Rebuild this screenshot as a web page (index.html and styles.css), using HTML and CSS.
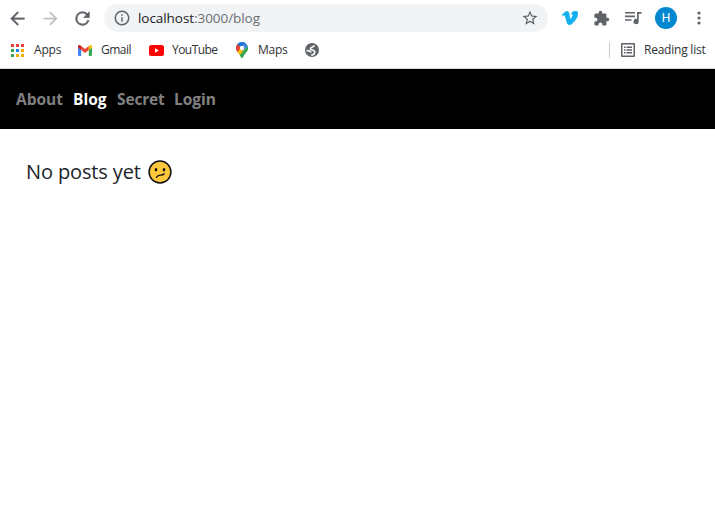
FILE: index.html
```
<!DOCTYPE html>
<html lang="en">
<head>
<meta charset="utf-8">
<title>Blog</title>
<link rel="stylesheet" href="styles.css">
</head>
<body>
<header class="browser">
  <div class="toolbar">
    <svg class="back" width="21" height="21" viewBox="0 0 24 24" fill="#5f6368" stroke="#5f6368" stroke-width=".3"><path d="M20 11H7.83l5.59-5.59L12 4l-8 8 8 8 1.41-1.41L7.83 13H20z"/></svg>
    <svg class="forward" width="21" height="21" viewBox="0 0 24 24" fill="#bdbfc1"><path d="M12 4l-1.41 1.41L16.17 11H4v2h12.17l-5.58 5.59L12 20l8-8z"/></svg>
    <svg class="reload" width="21" height="21" viewBox="0 0 24 24" fill="#5f6368" stroke="#5f6368" stroke-width=".4"><path d="M17.65 6.35A7.96 7.96 0 0 0 12 4a8 8 0 1 0 7.73 10h-2.08A6 6 0 1 1 12 6c1.66 0 3.14.69 4.22 1.78L13 11h7V4z"/></svg>
    <div class="address">
      <svg class="info" width="18" height="18" viewBox="0 0 24 24" fill="#5f6368"><path d="M11 7h2v2h-2zm0 4h2v6h-2zm1-9a10 10 0 1 0 0 20 10 10 0 0 0 0-20zm0 18a8 8 0 1 1 0-16 8 8 0 0 1 0 16z"/></svg>
      <span class="url"><span class="host">localhost</span>:3000/blog</span>
      <svg class="star" width="18" height="18" viewBox="0 0 24 24" fill="#5f6368"><path d="M22 9.24l-7.19-.62L12 2 9.19 8.63 2 9.24l5.46 4.73L5.82 21 12 17.27 18.18 21l-1.63-7.03zM12 15.4l-3.76 2.27 1-4.28-3.32-2.88 4.38-.38L12 6.1l1.71 4.04 4.38.38-3.32 2.88 1 4.28z"/></svg>
    </div>
    <svg class="vimeo" width="16" height="14" viewBox="0 0 24 21" fill="#12b1ee" stroke="#12b1ee" stroke-width=".8"><path d="M24 4.9c-.1 2.4-1.8 5.6-4.9 9.6-3.300 4.200-6 6.300-8.300 6.300-1.400 0-2.600-1.300-3.500-3.900L5.400 9.800C4.700 7.200 3.900 6 3.100 6c-.2 0-.8.4-1.900 1.100L0 5.700C3.100 3 5.400.6 7.200.4c1.900-.2 3.100 1.100 3.500 3.900.8 4.800 1.300 7.800 2 7.800.6 0 3.600-4.500 3.700-6.200.1-1.500-1.100-1.600-2.600-.9C15 1.500 17.200-.1 20.200 0 22.900.1 24.100 1.700 24 4.900z"/></svg>
    <svg class="puzzle" width="17" height="17" viewBox="0 0 24 24" fill="#5f6368"><path d="M20.500 11H19V7a2 2 0 0 0-2-2h-4V3.500a2.500 2.500 0 0 0-5 0V5H4a2 2 0 0 0-2 2v3.800h1.500a2.700 2.700 0 0 1 0 5.400H2V20a2 2 0 0 0 2 2h3.800v-1.500a2.700 2.700 0 0 1 5.400 0V22H17a2 2 0 0 0 2-2v-4h1.500a2.500 2.500 0 0 0 0-5z"/></svg>
    <svg class="queue" width="17" height="14" viewBox="0 0 17 14" fill="#5f6368"><path d="M0 1h10v1.600H0zM0 4.600h10v1.600H0zM0 8.200h6.500v1.600H0zM12 1h4.500v1.800h-2.800v7.700a2.600 2.600 0 1 1-1.700-2.400z"/></svg>
    <span class="avatar">H</span>
    <svg class="menu" width="4" height="14" viewBox="0 0 4 14" fill="#5f6368"><circle cx="2" cy="2" r="1.600"/><circle cx="2" cy="7" r="1.600"/><circle cx="2" cy="12" r="1.600"/></svg>
  </div>
  <div class="bookmarks">
    <svg width="13" height="13" viewBox="0 0 13 13"><path fill="#ea4335" d="M0 0h3v3H0zM5 0h3v3H5zM10 0h3v3h-3z"/><path fill="#34a853" d="M0 5h3v3H0zM0 10h3v3H0z"/><path fill="#1a86f7" d="M5 5h3v3H5z"/><path fill="#f9ab00" d="M10 5h3v3h-3zM5 10h3v3H5zM10 10h3v3h-3z"/></svg>
    <span class="label apps">Apps</span>
    <svg class="gmail" width="14" height="11" viewBox="0 0 14 11"><path fill="#4285f4" d="M0 2h3.200v9H1a1 1 0 0 1-1-1z"/><path fill="#34a853" d="M10.800 2H14v8a1 1 0 0 1-1 1h-2.200z"/><path fill="#ea4335" d="M3.200 1.100 7 4l3.800-2.900v4L7 8 3.200 5.100z"/><path fill="#c5221f" d="M0 1.700C0 .2 1.500-.3 2.500.5l.7.600v4L0 2.700z"/><path fill="#fbbc04" d="M14 1.700C14 .2 12.500-.3 11.500.5l-.7.600v4L14 2.700z"/></svg>
    <span class="label gm">Gmail</span>
    <svg class="youtube" width="15" height="11" viewBox="0 0 15 11"><rect width="15" height="11" rx="2.500" fill="#f00"/><path fill="#fff" d="M6 3.200v4.600l4-2.300z"/></svg>
    <span class="label yt">YouTube</span>
    <svg class="maps" width="12" height="16" viewBox="0 0 12 16"><clipPath id="pin"><path d="M6 0a6 6 0 0 0-6 6c0 3 2 4.200 3.500 6.300C4.900 14.200 5 16 6 16s1.100-1.800 2.500-3.700C10 10.200 12 9 12 6a6 6 0 0 0-6-6z"/></clipPath><g clip-path="url(#pin)"><path fill="#34a853" d="M0 0h12v16H0z"/><path fill="#fbbc04" d="M0 10.500 8 2l2 5-7.500 8L0 14z"/><path fill="#ea4335" d="M0 1l6 5-5 5.500L0 9z"/><path fill="#1a73e8" d="M1 1.500 5.300 5.500 11 0H2z"/><path fill="#4285f4" d="M4 8 11 0l2 3-7 7z"/><path fill="#fbbc04" d="M1 10.500 4 7l3.500 1-5 6z"/><path fill="#34a853" d="M12 4 3 14l4 3 6-8z"/></g><circle cx="6" cy="6" r="2.200" fill="#fff"/></svg>
    <span class="label mp">Maps</span>
    <svg class="globe" width="14" height="14" viewBox="0 0 14 14"><circle cx="7" cy="7" r="7" fill="#5f6368"/><path fill="none" stroke="#fff" stroke-width="1.600" d="M9.300 2.200C9.300 4.300 5.400 3.500 5.400 5.800c0 1.700 4.300.5 4.300 3 0 1.700-1.400 3.200-3.400 3.300M1.600 7.600c2.400 0 4.100.2 4.400 1.900"/></svg>
    <div class="reading">
      <svg width="14" height="14" viewBox="0 0 14 14" fill="#5f6368"><path fill-rule="evenodd" d="M1 0h12a1 1 0 0 1 1 1v12a1 1 0 0 1-1 1H1a1 1 0 0 1-1-1V1a1 1 0 0 1 1-1zm.5 1.500v11h11v-11z"/><path d="M3 3.500h1.500V5H3zM5.500 3.500H11V5H5.500zM3 6.300h1.500v1.500H3zM5.500 6.300H11v1.500H5.500zM3 9h1.500v1.500H3zM5.500 9H11v1.500H5.500z"/></svg>
      <span class="label rl">Reading list</span>
    </div>
  </div>
</header>
<nav class="nav">
  <a class="n1">About</a><a class="n2 active">Blog</a><a class="n3">Secret</a><a class="n4">Login</a>
</nav>
<main class="content">
  <span class="empty">No posts yet</span>
  <svg width="24" height="24" viewBox="0 0 24 24" role="img" aria-label="Confused face"><circle cx="12" cy="12" r="10.900" fill="#ffc83d" stroke="#111" stroke-width="1.500"/><ellipse cx="8" cy="9.700" rx="1.300" ry="1.800" fill="#111"/><ellipse cx="16" cy="9.700" rx="1.300" ry="1.800" fill="#111"/><path fill="none" stroke="#111" stroke-width="1.400" stroke-linecap="round" d="M8.500 17.300c1.200-2.100 2.300-2.300 4-2.200 1.600.1 2.700-.2 3.700-1.300"/></svg>
</main>
</body>
</html>
```
FILE: styles.css
```
* { box-sizing: border-box; }
body { margin: 0; height: 512px; background: #fff; font-family: "Open Sans", "Noto Sans", sans-serif; overflow: hidden; }
svg { display: block; flex: none; }
.browser { height: 69px; border-bottom: 1px solid #d5d6d8; }
.toolbar { display: flex; align-items: center; height: 36px; padding-left: 7px; }
.forward { margin-left: 11.5px; }
.reload { margin-left: 11px; }
.address { display: flex; align-items: center; width: 444px; height: 28px; margin-left: 11.5px; padding: 0 9px; border-radius: 14px; background: #f1f3f4; }
.url { width: 130px; margin-left: 7px; font-size: 13.5px; line-height: 20px; letter-spacing: -0.06px; color: #6a6e73; white-space: nowrap; }
.host { color: #202124; }
.star { margin-left: auto; }
.vimeo { margin-left: 14px; }
.puzzle { margin-left: 15px; }
.queue { margin-left: 15px; }
.avatar { width: 22px; height: 22px; margin-left: 13px; border-radius: 50%; background: #0288d1; color: #fff; font: 12px/22px Roboto, sans-serif; text-align: center; }
.menu { margin-left: 19.5px; }
.bookmarks { display: flex; align-items: center; height: 28px; padding-left: 11px; }
.label { font-size: 12px; line-height: 20px; color: #303134; white-space: nowrap; }
.apps { width: 44px; margin-left: 10px; letter-spacing: -0.2px; }
.gm { width: 40px; margin-left: 9px; letter-spacing: -0.45px; }
.youtube { margin-left: 8px; }
.yt { width: 56px; margin-left: 8px; letter-spacing: -0.5px; }
.yt { letter-spacing: -0.5px; }
.maps { margin-left: 8px; }
.mp { width: 38px; margin-left: 10px; letter-spacing: -0.25px; }
.globe { margin-left: 9px; }
.reading { display: flex; align-items: center; width: 106px; height: 16px; margin-left: auto; padding-left: 11px; border-left: 1px solid #c9cbce; }
.rl { margin-left: 9px; letter-spacing: -0.23px; }
.yt { letter-spacing: -0.55px; }
.gm { letter-spacing: -0.5px; }
.nav { display: flex; align-items: center; height: 60px; padding-left: 16px; background: #000; font-size: 15.5px; font-weight: 700; line-height: 24px; color: #808080; white-space: nowrap; }
.n1 { width: 57px; }
.n2 { width: 44px; }
.n3 { width: 57px; letter-spacing: -0.15px; }
.active { color: #fff; }
.content { display: flex; align-items: center; height: 30px; margin: 28px 0 0 26px; color: #212529; }
.empty { width: 122px; font-size: 20px; line-height: 30px; letter-spacing: -0.12px; white-space: nowrap; }
```
